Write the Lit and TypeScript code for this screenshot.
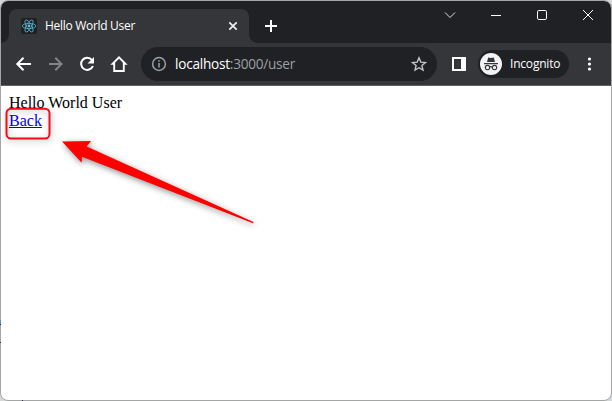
import { LitElement, html, css, svg } from "lit";
import { customElement } from "lit/decorators.js";

const electron = (angle: number) => svg`<ellipse cx="8" cy="8" rx="6.8" ry="2.6" transform="rotate(${angle} 8 8)"></ellipse>`;

@customElement("browser-tabs")
class BrowserTabs extends LitElement {
  static styles = css`
    :host { display: flex; height: 42px; background: #202124; color: #fff; }
    svg { display: block; fill: none; flex: none; }
    .strip { display: flex; flex: 1; align-items: flex-end; padding-left: 8px; }
    .tab { position: relative; display: flex; align-items: center; box-sizing: border-box; width: 240px; height: 34px;
      padding: 0 11px 0 12px; background: #35363a; border-radius: 8px 8px 0 0; }
    .tab::before, .tab::after { content: ""; position: absolute; bottom: 0; width: 8px; height: 8px; }
    .tab::before { left: -8px; background: radial-gradient(circle at 0 0, transparent 7.5px, #35363a 8px); }
    .tab::after { right: -8px; background: radial-gradient(circle at 100% 0, transparent 7.5px, #35363a 8px); }
    .fav { background: #202124; border-radius: 2px; stroke: #50b0c6; stroke-width: .85; }
    .title { flex: 1; margin-left: 8px; font: 12px/16px "Open Sans", sans-serif; letter-spacing: -.3px; white-space: nowrap; }
    .plus { margin: 0 0 10px 15px; }
    .controls { display: flex; gap: 30px; height: 28px; align-items: center; padding-right: 15px; }
    .search { margin-right: 2px; }
  `;
  render() {
    return html`
      <div class="strip">
        <div class="tab">
          <svg class="fav" width="16" height="16">${[0, 60, 120].map(electron)}<circle cx="8" cy="8" r="1.4" fill="#58c4dc" stroke="none"></circle></svg>
          <span class="title">Hello World User</span>
          <svg width="10" height="10" stroke="#f1f1f2" stroke-width="1.7"><path d="M1.3 1.3l7.4 7.4M8.7 1.3l-7.4 7.4"></path></svg>
        </div>
        <svg class="plus" width="14" height="14" stroke="#fff" stroke-width="2"><path d="M7 1v12M1 7h12"></path></svg>
      </div>
      <div class="controls">
        <svg class="search" width="12" height="12" stroke="#e0e0e1"><path d="M1 3.5l5 5 5-5"></path></svg>
        <svg width="16" height="12" stroke="#fff"><path d="M3 6.5h10"></path></svg>
        <svg width="16" height="12" stroke="#fff"><rect x="3.5" y="1.5" width="9" height="9" rx="1.3"></rect></svg>
        <svg width="16" height="12" stroke="#fff"><path d="M3 1l10 10M13 1L3 11"></path></svg>
      </div>`;
  }
}

@customElement("browser-toolbar")
class BrowserToolbar extends LitElement {
  static styles = css`
    :host { display: flex; align-items: center; box-sizing: border-box; height: 43px; padding-left: 12px;
      background: #35363a; border-bottom: 1px solid #5f6064; color: #fff; }
    svg { display: block; fill: none; flex: none; }
    .nav { display: flex; gap: 12px; }
    .address { display: flex; align-items: center; box-sizing: border-box; width: 296px; height: 34px; margin-left: 12px;
      padding: 0 10px 0 10px; background: #202124; border-radius: 17px; }
    .url { flex: 1; margin-left: 8px; font: 13.6px/20px "Open Sans", sans-serif; letter-spacing: -.24px; color: #9aa0a6; white-space: nowrap; }
    .host { color: #fff; }
    .panel { margin-left: 15px; }
    .profile { display: flex; align-items: center; box-sizing: border-box; width: 91px; height: 28px; margin-left: 12px;
      padding-left: 2px; background: #202124; border-radius: 14px; }
    .name { margin-left: 8px; font: 12px/18px "Open Sans", sans-serif; letter-spacing: -.2px; }
    .more { margin-left: 17px; }
  `;
  render() {
    return html`
      <div class="nav">
        <svg width="20" height="20" stroke="#fff" stroke-width="2"><path d="M18 10H4.5M10.5 3.8L4.3 10l6.2 6.2"></path></svg>
        <svg width="20" height="20" stroke="#828387" stroke-width="2"><path d="M4 10h12.5M10.3 3.8l6.2 6.2-6.2 6.2"></path></svg>
        <svg width="20" height="20" stroke="#fff" stroke-width="2"><path d="M15 6A6.1 6.1 0 1 0 15.9 12"></path><path d="M17 3v6.5h-6.5z" fill="#fff" stroke="none"></path></svg>
        <svg width="20" height="20" stroke="#fff" stroke-width="1.9"><path d="M5.2 17V9.8H3.6L10 3.4l6.4 6.4h-1.6V17z"></path></svg>
      </div>
      <div class="address">
        <svg width="16" height="16" stroke="#9aa0a6" stroke-width="1.5"><circle cx="8" cy="8" r="6.4"></circle><path d="M8 7v4.5M8 4.3v1.5"></path></svg>
        <span class="url"><span class="host">localhost</span>:3000/user</span>
        <svg width="16" height="16" stroke="#c2c3c5" stroke-width="1.4"><path d="M8 1.8l1.8 4.3 4.7.4-3.6 3 1.1 4.6L8 11.7l-4 2.4 1.1-4.6-3.6-3 4.7-.4z"></path></svg>
      </div>
      <svg class="panel" width="14" height="14"><path fill="#fff" fill-rule="evenodd" d="M0 0h14v14H0zM2 2v10h7V2z"></path></svg>
      <div class="profile">
        <svg width="22" height="22"><circle cx="11" cy="11" r="11" fill="#f1f3f4"></circle><path fill="#35363a" d="M7 9l1.2-4.5Q11 5.4 13.8 4.5L15 9z"></path><g stroke="#35363a" stroke-width="1.1"><path d="M4 10.6h14M9.6 14q1.4-.7 2.8 0"></path><circle cx="7.5" cy="14.6" r="2.2"></circle><circle cx="14.5" cy="14.6" r="2.2"></circle></g></svg>
        <span class="name">Incognito</span>
      </div>
      <svg class="more" width="6" height="14"><g fill="#fff"><circle cx="3.5" cy="2" r="1.6"></circle><circle cx="3.5" cy="7" r="1.6"></circle><circle cx="3.5" cy="12" r="1.6"></circle></g></svg>`;
  }
}

@customElement("app-root")
class AppRoot extends LitElement {
  static styles = css`
    :host { position: relative; display: block; width: 612px; height: 401px; background: #d5d8d8; overflow: hidden; }
    .window { display: flex; flex-direction: column; box-sizing: border-box; height: 401px;
      border: 1px solid #a4a5a5; border-radius: 8px; overflow: hidden; background: #fff; }
    .page { flex: 1; padding: 8px; font: 16px/18px "Liberation Serif", serif; color: #000; }
    a { color: #0000ee; text-decoration: underline; }
    .marks { position: absolute; inset: 0; pointer-events: none; }
    .shade { filter: drop-shadow(1px 2px 3px rgba(0, 0, 0, .45)); }
    .box { filter: drop-shadow(1px 2px 3px rgba(0, 0, 0, .3)); }
  `;
  render() {
    return html`
      <div class="window">
        <browser-tabs></browser-tabs>
        <browser-toolbar></browser-toolbar>
        <div class="page">
          <div>Hello World User</div>
          <a href="#">Back</a>
        </div>
      </div>
      <svg class="marks" width="612" height="401">
        <rect class="box" x="6.5" y="108.7" width="43" height="29.8" rx="4.5" fill="none" stroke="#fa0a14" stroke-width="2"></rect>
        <path class="shade" fill="#f00" d="M62 141.5L91 141l-4.3 5.4L253.5 222l-.5 1.3L82 156.8l-.3 6z"></path>
        <path fill="#5f91bd" d="M0 320h1v4H0z"></path>
        <path fill="#303050" d="M0 324h1v1H0zM0 342h1v1H0zM22 400h1v1h-1z"></path>
      </svg>`;
  }
}
